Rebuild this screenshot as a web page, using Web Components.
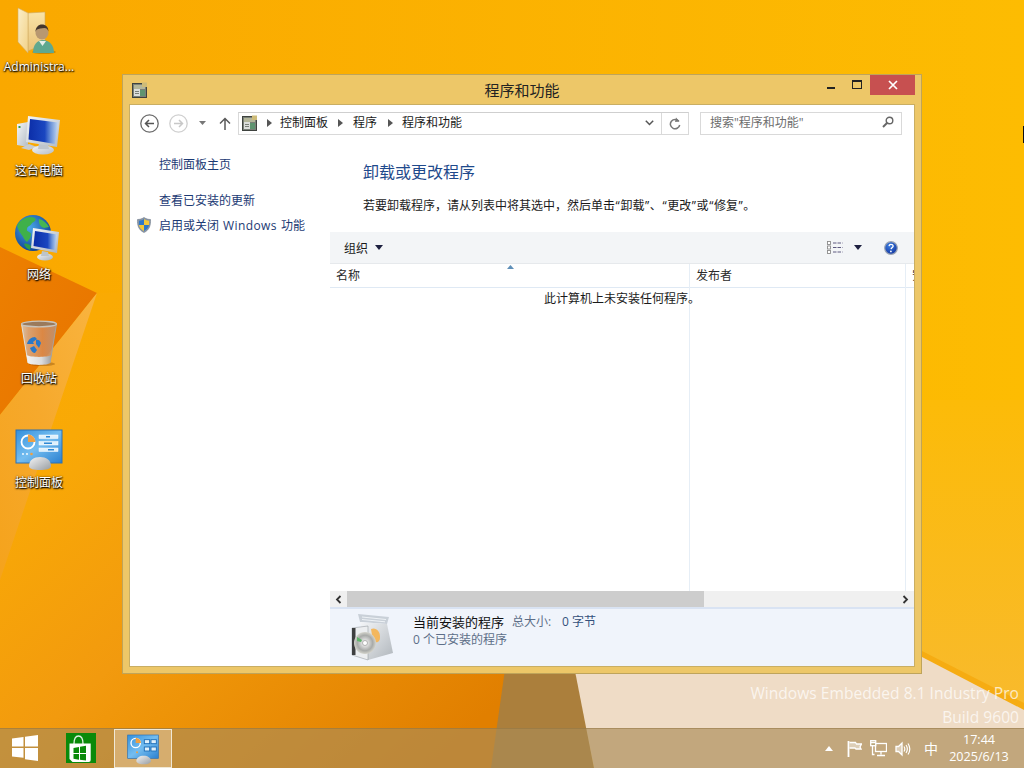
<!DOCTYPE html>
<html lang="zh">
<head>
<meta charset="utf-8">
<title>程序和功能</title>
<style>
    html, body { margin: 0; padding: 0; }
    body {
        width: 1024px;
        height: 768px;
        overflow: hidden;
        font-family: "Open Sans", "Noto Sans CJK SC", sans-serif;
        font-size: 12px;
    }
    svg { display: block; }
</style>
</head>
<body>
<win-desktop>
    <desk-icon>
        <svg slot="icon" width="48" height="48" viewBox="0 0 48 48">
            <defs>
                <linearGradient id="fb" x1="0" y1="0" x2="0" y2="1"><stop offset="0" stop-color="#f9e3a8"/><stop offset="1" stop-color="#e9c378"/></linearGradient>
                <linearGradient id="ff" x1="0" y1="0" x2="1" y2="1"><stop offset="0" stop-color="#fbeec8"/><stop offset="1" stop-color="#f2d288"/></linearGradient>
            </defs>
            <polygon points="13,6 30,5 30,37 13,44" fill="url(#fb)" stroke="#cfa85e" stroke-width=".6"/>
            <polygon points="3,1 13,6 13,46 3,35" fill="url(#ff)" stroke="#d4ae66" stroke-width=".6"/>
            <ellipse cx="29" cy="45" rx="12" ry="2" fill="#8a5a00" opacity=".4"/>
            <path d="M18 46c0-8 4-13 10-13s11 5 11 13z" fill="#5fa88f"/>
            <path d="M24 34l3.500 5 3.500-5z" fill="#e8efe8"/>
            <circle cx="27" cy="26" r="6.500" fill="#b89870"/>
            <path d="M20.500 25c0-5 3-7.500 6.500-7.500s6.500 2.500 6.500 7c-1-2.500-2-3.500-4-3.500-3 .5-6 .5-7.500 1.500-.8.6-1 1.500-1.500 2.500z" fill="#43352c"/>
        </svg>
        Administra...
    </desk-icon>
    <desk-icon>
        <svg slot="icon" width="48" height="48" viewBox="0 0 48 48">
            <defs>
                <linearGradient id="sc" x1="0" y1="0" x2="1" y2="0"><stop offset="0" stop-color="#0c2ea8"/><stop offset=".55" stop-color="#1a46c0"/><stop offset=".75" stop-color="#6a92d8"/><stop offset="1" stop-color="#c4d8f0"/></linearGradient>
                <linearGradient id="sv" x1="0" y1="0" x2="1" y2="1"><stop offset="0" stop-color="#f4f6f8"/><stop offset="1" stop-color="#b4bcc4"/></linearGradient>
            </defs>
            <polygon points="2,13 13,11 13,36 2,34" fill="url(#sv)"/>
            <rect x="3.500" y="15" width="2" height="2" fill="#3a9a4a"/>
            <path d="M6 37l8-4 8 3-8 3z" fill="#c8ccd0"/>
            <ellipse cx="28" cy="39" rx="11" ry="4.500" fill="url(#sv)"/>
            <polygon points="24,32 33,33 34,38 23,38" fill="#c0c6cc"/>
            <polygon points="13,5 45,9 42,36 11,31" fill="url(#sv)"/>
            <polygon points="15,8 43,11.500 40,33 13.500,28.500" fill="url(#sc)"/>
        </svg>
        这台电脑
    </desk-icon>
    <desk-icon>
        <svg slot="icon" width="48" height="48" viewBox="0 0 48 48">
            <defs>
                <radialGradient id="gl" cx=".4" cy=".35" r=".7"><stop offset="0" stop-color="#4aa8e8"/><stop offset="1" stop-color="#0c3e92"/></radialGradient>
                <linearGradient id="sc2" x1="0" y1="0" x2="1" y2="0"><stop offset="0" stop-color="#0c2ea8"/><stop offset=".6" stop-color="#1a46c0"/><stop offset=".78" stop-color="#6a92d8"/><stop offset="1" stop-color="#c4d8f0"/></linearGradient>
                <linearGradient id="sv2" x1="0" y1="0" x2="1" y2="1"><stop offset="0" stop-color="#f4f6f8"/><stop offset="1" stop-color="#aab2ba"/></linearGradient>
            </defs>
            <circle cx="18" cy="18" r="18" fill="url(#gl)"/>
            <path d="M7 5c4-3 9-4 13-2 2 2-1 4-3 5-1 3-5 3-5 6-1 3 3 2 4 5 0 3-2 6-4 8-3-2-4-6-6-8-2-3-3-5-4-8 1-3 3-5 5-6z" fill="#3fb04a"/>
            <path d="M24 4c4 1 8 4 10 8l-5 1c-3-1-6-4-5-9z" fill="#45b552"/>
            <path d="M9 29c2-1 5 0 7 2l-1 4c-3-1-5-3-6-6z" fill="#2f9c48"/>
            <ellipse cx="30" cy="42" rx="8" ry="3.500" fill="url(#sv2)"/>
            <polygon points="27,36 33,37 34,41 26,41" fill="#bcc4ca"/>
            <polygon points="18,13 44,17 42,38 16,33" fill="url(#sv2)"/>
            <polygon points="20,16 42,19.500 40,35 18.500,31" fill="url(#sc2)"/>
        </svg>
        网络
    </desk-icon>
    <desk-icon>
        <svg slot="icon" width="48" height="48" viewBox="0 0 48 48">
            <defs>
                <linearGradient id="bn" x1="0" y1="0" x2="1" y2="0"><stop offset="0" stop-color="#d4ccc2"/><stop offset=".2" stop-color="#d8a884"/><stop offset=".6" stop-color="#d98a50"/><stop offset="1" stop-color="#b89480"/></linearGradient>
                <linearGradient id="pp" x1="0" y1="0" x2="1" y2="0"><stop offset="0" stop-color="#f4f4f4"/><stop offset=".6" stop-color="#dcdcdc"/><stop offset="1" stop-color="#9ea0a2"/></linearGradient>
            </defs>
            <ellipse cx="27" cy="45" rx="13" ry="2" fill="#8a4a00" opacity=".4"/>
            <path d="M6.500 5l6.500 39c3 2.500 19 2.500 22 0l6.500-39z" fill="url(#bn)" opacity=".85"/>
            <path d="M6.500 5l6.500 39" stroke="#e4e0d8" stroke-width="1" fill="none"/>
            <path d="M41.500 5l-6.500 39" stroke="#a8a49c" stroke-width="1" fill="none"/>
            <ellipse cx="24" cy="5" rx="17.500" ry="2.800" fill="#9a7a5c" stroke="#c8c4bc" stroke-width="1.300"/>
            <path d="M11.500 36c4 2.500 21 2.500 25 0l-1.500 8c-3 2.500-19 2.500-22 0z" fill="url(#pp)"/>
            <path d="M12 25c1-4 4-7 8-7l2 2-4 3 1 2zM15 29l4-2 3 4-2 3c-2 0-4-2-5-5zM21 21c2-1 4 0 5 3l-2 5-3-4z" fill="#2a78c8"/>
        </svg>
        回收站
    </desk-icon>
    <desk-icon>
        <svg slot="icon" width="48" height="48" viewBox="0 0 48 48">
            <defs>
                <linearGradient id="cp" x1="0" y1="0" x2="1" y2="1"><stop offset="0" stop-color="#3390dc"/><stop offset=".5" stop-color="#74bdf0"/><stop offset="1" stop-color="#2a80d0"/></linearGradient>
                <linearGradient id="dm" x1="0" y1="0" x2="1" y2="1"><stop offset="0" stop-color="#f4f4f4"/><stop offset="1" stop-color="#989da2"/></linearGradient>
            </defs>
            <rect x="1" y="7" width="46" height="33" fill="url(#cp)" stroke="#2a70b4"/>
            <circle cx="13" cy="19" r="6.500" fill="none" stroke="#ffffff" stroke-width="1.800"/>
            <path d="M13 11.500a7.500 7.500 0 0 1 7.500 7.500h-7.500z" fill="#f0a040"/>
            <g fill="#dff0fb" stroke="#ffffff" stroke-width=".5">
                <rect x="24" y="12" width="19" height="3.500"/><rect x="24" y="18.500" width="19" height="3.500"/><rect x="24" y="25" width="19" height="3.500"/>
            </g>
            <rect x="31" y="13" width="4" height="1.500" fill="#2f88d4"/><rect x="29" y="19.500" width="8" height="1.500" fill="#2f88d4"/><rect x="33" y="26" width="6" height="1.500" fill="#2f88d4"/>
            <circle cx="8" cy="31" r=".9" fill="#fff"/><circle cx="12" cy="31" r=".9" fill="#fff"/><circle cx="16.500" cy="31" r="1.300" fill="#f0a040"/>
            <path d="M14 43c0-6 5-9 11-9s11 3 11 9c0 3-5 4-11 4s-11-1-11-4z" fill="url(#dm)"/>
        </svg>
        控制面板
    </desk-icon>

    <app-window slot="window" heading="程序和功能">
        <explorer-nav slot="nav"></explorer-nav>
        <side-panel slot="side"></side-panel>
        <programs-pane slot="main"></programs-pane>
    </app-window>

    <task-bar slot="taskbar"></task-bar>
</win-desktop>

<script>
// icons used by more than one shadow tree
const smallCp = `
<svg width="16" height="16" viewBox="0 0 16 16">
    <rect x="0.500" y="1.500" width="14" height="14" fill="#7a8078" stroke="#3e423e"/>
    <rect x="2" y="3" width="11" height="4" fill="#b4b69a"/>
    <rect x="10" y="0.500" width="5" height="4.500" fill="#cdbb78"/>
    <rect x="2" y="7" width="6" height="7" fill="#dcdedc"/>
    <rect x="8" y="8" width="5" height="6" fill="#5f9470"/>
    <rect x="3" y="9" width="4" height="1" fill="#7a8078"/>
    <rect x="3" y="11" width="4" height="1" fill="#7a8078"/>
</svg>`;

const chevron = (left, right) => `<svg style="margin:0 ${right}px 0 ${left}px" width="5" height="8" viewBox="0 0 5 8"><path d="M0 0l5 4-5 4z" fill="#555"/></svg>`;

function makeElement(name, html) {
    const tpl = document.createElement('template');
    tpl.innerHTML = html;
    class El extends HTMLElement {
        constructor() {
            super();
            const shadow = this.attachShadow({mode: 'open'});
            shadow.append(tpl.content.cloneNode(true));
            const heading = shadow.querySelector('[data-heading]');
            if (heading) heading.textContent = this.getAttribute('heading');
        }
    }
    customElements.define(name, El);
}

makeElement('win-desktop', `
<style>
    :host {
        display: flex;
        flex-direction: column;
        position: relative;
        width: 1024px;
        height: 768px;
        overflow: hidden;
    }
    .wall { position: absolute; left: 0; top: 0; }
    .icons {
        position: relative;
        flex: 1;
        display: flex;
        flex-direction: column;
        padding-top: 7px;
        width: 78px;
    }
    .win { position: absolute; left: 122px; top: 74px; }
    .mark {
        position: absolute;
        right: 5px;
        top: 681px;
        text-align: right;
        color: rgba(255,255,255,.72);
        font-size: 15.6px;
        line-height: 24px;
    }
    .bar { position: relative; }
    .cursor { position: absolute; right: 0; top: 126px; width: 1px; height: 17px; background: #111; }
</style>
<svg class="wall" width="1024" height="768" viewBox="0 0 1024 768">
    <defs>
        <linearGradient id="base" x1="0" y1="0" x2="1" y2="0"><stop offset="0" stop-color="#faa800"/><stop offset="1" stop-color="#fdbc02"/></linearGradient>
        <linearGradient id="low" x1="0" y1="0" x2="1" y2="1"><stop offset="0" stop-color="#fbab00"/><stop offset=".22" stop-color="#f9a906"/><stop offset=".5" stop-color="#f29a0e"/><stop offset=".6" stop-color="#ee9408"/><stop offset=".91" stop-color="#e17f00"/></linearGradient>
        <linearGradient id="wedge" x1="0" y1="0" x2="1" y2="1"><stop offset="0" stop-color="#ed8000"/><stop offset="1" stop-color="#e77300"/></linearGradient>
        <linearGradient id="ray" x1="1" y1="0" x2="0" y2="1"><stop offset="0" stop-color="#f9b440"/><stop offset=".5" stop-color="#f6a92c"/><stop offset="1" stop-color="#f5a31c"/></linearGradient>
        <linearGradient id="right" x1="0" y1="0" x2="0" y2="1"><stop offset="0" stop-color="#fcbb08"/><stop offset="1" stop-color="#f8ba2e"/></linearGradient>
    </defs>
    <rect width="1024" height="768" fill="url(#base)"/>
    <rect x="922" y="400" width="102" height="320" fill="url(#right)"/>
    <polygon points="0,415 97,293 520,293 505,768 0,768" fill="url(#low)"/>
    <polygon points="0,247 97,293 0,415" fill="url(#wedge)"/>
    <polygon points="97,293 0,415 0,580" fill="url(#ray)"/>
    <polygon points="512,620 567,620 594,768 491,768" fill="#ab7f3c"/>
    <polygon points="922,651 1024,703 1024,711 922,658" fill="#f6ac12"/>
    <polygon points="565,620 922,657 1024,710 1024,768 594,768" fill="#efdcc6"/>
</svg>
<div class="icons"><slot></slot></div>
<div class="mark">Windows Embedded 8.1 Industry Pro<br>Build 9600</div>
<div class="win"><slot name="window"></slot></div>
<div class="bar"><slot name="taskbar"></slot></div>
<div class="cursor"></div>
`);

makeElement('desk-icon', `
<style>
    :host {
        display: flex;
        flex-direction: column;
        align-items: center;
        width: 78px;
        height: 104px;
        color: #fff;
        font-size: 12px;
        line-height: 16px;
        text-shadow: 0 1px 2px #000, 1px 1px 1px rgba(0,0,0,.75), 0 0 2px rgba(0,0,0,.6);
        white-space: nowrap;
    }
    .pic { width: 48px; height: 48px; margin-bottom: 4px; }
</style>
<div class="pic"><slot name="icon"></slot></div>
<slot></slot>
`);

makeElement('app-window', `
<style>
    :host {
        display: block;
        width: 800px;
        height: 600px;
        box-sizing: border-box;
        background: #edc768;
        border: 1px solid #bfa45a;
        padding: 0 6px 6px 6px;
    }
    .frame { display: flex; flex-direction: column; height: 100%; }
    .title {
        display: flex;
        align-items: flex-start;
        height: 29px;
        position: relative;
    }
    .appicon { margin: 7px 0 0 3px; }
    .text {
        position: absolute;
        left: 0;
        right: 0;
        top: 4px;
        text-align: center;
        font-size: 15px;
        line-height: 22px;
        color: #222;
    }
    .ctrls { margin-left: auto; display: flex; align-items: flex-start; position: relative; }
    .btn { width: 26px; height: 20px; display: flex; align-items: center; justify-content: center; }
    .min { padding-right: 1px; box-sizing: border-box; }
    .close { width: 45px; background: #c75050; }
    .client {
        flex: 1;
        min-height: 0;
        display: flex;
        flex-direction: column;
        background: #fff;
        border: 1px solid #c9ae63;
    }
    .body { flex: 1; min-height: 0; display: flex; }
</style>
<div class="frame">
    <div class="title">
        <div class="appicon">${smallCp}</div>
        <div class="text" data-heading></div>
        <div class="ctrls">
            <div class="btn min"><svg width="10" height="10" viewBox="0 0 10 10"><rect x="1" y="7" width="8" height="2" fill="#222"/></svg></div>
            <div class="btn"><svg width="12" height="10" viewBox="0 0 12 10"><rect x="1.500" y="0.500" width="9" height="8" fill="none" stroke="#222"/><rect x="1" y="0" width="10" height="2" fill="#222"/></svg></div>
            <div class="btn close"><svg width="10" height="10" viewBox="0 0 10 10"><path d="M1 1l8 8M9 1l-8 8" stroke="#fff" stroke-width="1.700"/></svg></div>
        </div>
    </div>
    <div class="client">
        <slot name="nav"></slot>
        <div class="body">
            <slot name="side"></slot>
            <slot name="main"></slot>
        </div>
    </div>
</div>
`);

makeElement('explorer-nav', `
<style>
    :host {
        display: flex;
        align-items: center;
        height: 36px;
        flex: none;
        padding: 0 0 0 10px;
        box-sizing: border-box;
        color: #1a1a1a;
    }
    .fwd, .caret, .up { flex: none; }
    .fwd { margin-left: 10px; }
    .caret { margin-left: 11px; }
    .up { margin-left: 13px; }
    .addr {
        margin-left: 7px;
        width: 451px;
        height: 23px;
        box-sizing: border-box;
        border: 1px solid #d9d9d9;
        border-top-color: #cfcfcf;
        display: flex;
        align-items: center;
        padding-left: 3px;
    }
    .crumb { display: flex; align-items: center; padding-bottom: 2px; }
    .crumb svg { position: relative; top: 1px; }
    .combo { margin-left: auto; display: flex; height: 100%; align-items: center; }
    .drop { width: 23px; display: flex; justify-content: center; }
    .refresh {
        width: 26px;
        height: 100%;
        border-left: 1px solid #d9d9d9;
        display: flex;
        align-items: center;
        justify-content: center;
    }
    .search {
        margin-left: 11px;
        width: 202px;
        height: 23px;
        box-sizing: border-box;
        border: 1px solid #d9d9d9;
        display: flex;
        align-items: center;
        padding: 0 7px 2px 9px;
        color: #6d6d6d;
        white-space: nowrap;
    }
    .search svg { margin-left: auto; }
</style>
<svg width="19" height="19" viewBox="0 0 19 19"><circle cx="9.500" cy="9.500" r="8.700" fill="#fff" stroke="#6a6a6a" stroke-width="1.300"/><path d="M14 9.500H5.500M9 6L5.500 9.500 9 13" fill="none" stroke="#555" stroke-width="1.500"/></svg>
<svg class="fwd" width="19" height="19" viewBox="0 0 19 19"><circle cx="9.500" cy="9.500" r="8.700" fill="#fff" stroke="#cfcfcf" stroke-width="1.300"/><path d="M5 9.500h8.500M10 6l3.500 3.500L10 13" fill="none" stroke="#c8c8c8" stroke-width="1.500"/></svg>
<svg class="caret" width="7" height="4" viewBox="0 0 7 4"><path d="M0 0h7L3.500 4z" fill="#777"/></svg>
<svg class="up" width="12" height="13" viewBox="0 0 12 13"><path d="M6 13V1.500M1 6.500L6 1.500l5 5" fill="none" stroke="#5a5a5a" stroke-width="1.500"/></svg>
<div class="addr">
    ${smallCp}
    <span class="crumb">${chevron(9, 8)}控制面板</span>
    <span class="crumb">${chevron(10, 10)}程序</span>
    <span class="crumb">${chevron(11, 9)}程序和功能</span>
    <div class="combo">
        <div class="drop"><svg width="9" height="6" viewBox="0 0 9 6"><path d="M.8.800L4.500 4.500 8.200.800" fill="none" stroke="#555" stroke-width="1.500"/></svg></div>
        <div class="refresh"><svg width="12" height="13" viewBox="0 0 12 13"><path d="M9.800 4.200A4.700 4.700 0 1 0 10.700 8" fill="none" stroke="#777" stroke-width="1.500"/><path d="M7 .5l3.500 4-4.500 .5z" fill="#777"/></svg></div>
    </div>
</div>
<div class="search">
    搜索"程序和功能"
    <svg width="12" height="12" viewBox="0 0 12 12"><circle cx="7.500" cy="4.500" r="3.300" fill="none" stroke="#666" stroke-width="1.400"/><path d="M5 7L1 11" stroke="#666" stroke-width="2"/></svg>
</div>
`);

makeElement('side-panel', `
<style>
    :host {
        display: flex;
        flex-direction: column;
        flex: none;
        width: 200px;
        box-sizing: border-box;
        padding-top: 16px;
        color: #1c3a74;
        line-height: 16px;
    }
    .link { padding-left: 29px; }
    .second { margin-top: 20px; }
    .third { margin-top: 9px; padding-left: 6px; display: flex; align-items: center; gap: 7px; }
    .third svg { position: relative; top: -1px; }
    .latin { letter-spacing: .4px; word-spacing: .5px; }
</style>
<div class="link">控制面板主页</div>
<div class="link second">查看已安装的更新</div>
<div class="third">
    <svg width="16" height="16" viewBox="0 0 16 16">
        <path d="M8 .5c2 1.300 4 2 6.500 2 .3 5.500-1 10.500-6.500 13C2.500 13 1.200 8 1.500 2.500 4 2.500 6 1.800 8 .5z" fill="#8c98a8" stroke="#6f7a8a" stroke-width=".6"/>
        <path d="M8 2v6H3C2.900 6 3 5 3 3.700 5 3.600 6.500 3 8 2z" fill="#2f78c8"/>
        <path d="M8 2c1.500 1 3 1.600 5 1.700 0 1.300.1 2.300 0 4.300H8z" fill="#f4c93a"/>
        <path d="M3 8h5v6c-3-1.500-4.500-3.500-5-6z" fill="#f4c93a"/>
        <path d="M8 8h5c-.5 2.500-2 4.500-5 6z" fill="#2f78c8"/>
    </svg>
    <span>启用或关闭<span class="latin"> Windows </span>功能</span>
</div>
`);

makeElement('programs-pane', `
<style>
    :host {
        display: flex;
        flex-direction: column;
        flex: 1;
        min-width: 0;
        color: #1a1a1a;
    }
    h1 {
        margin: 21px 0 0 33px;
        font-size: 16px;
        font-weight: normal;
        line-height: 20px;
        color: #1f4a8c;
    }
    p { margin: 16px 0 18px 33px; line-height: 16px; }
    .q { margin: 0 .6px; }
    .tools {
        display: flex;
        align-items: center;
        height: 31px;
        flex: none;
        background: #f3f5f7;
        border-bottom: 1px solid #e6e9ec;
        padding-left: 14px;
    }
    .tri { margin-left: 7px; }
    .view { margin-left: auto; }
    .view + .tri { margin-left: 11px; }
    .help { margin: 0 16px 0 22px; }
    .list {
        flex: 1;
        min-height: 0;
        display: flex;
        overflow: hidden;
        position: relative;
    }
    .col { flex: none; display: flex; flex-direction: column; box-sizing: border-box; border-right: 1px solid #e6eef6; }
    .c1 { width: 360px; position: relative; }
    .c2 { width: 216px; }
    .c3 { flex: 1; min-width: 0; border-right: 0; }
    .head {
        height: 24px;
        box-sizing: border-box;
        border-bottom: 1px solid #dfe9f4;
        padding-left: 6px;
        line-height: 23px;
        white-space: nowrap;
        overflow: hidden;
        color: #2a2a2a;
    }
    .sort { position: absolute; left: 177px; top: 1px; }
    .empty {
        position: absolute;
        left: 0;
        right: 0;
        top: 27px;
        text-align: center;
        line-height: 16px;
    }
    .scroll {
        display: flex;
        flex: none;
        height: 16px;
        background: #f0f0f0;
    }
    .arrow { width: 17px; display: flex; align-items: center; justify-content: center; flex: none; }
    .track { flex: 1; }
    .thumb { width: 357px; height: 100%; background: #cdcdcd; }
    .details {
        flex: none;
        height: 59px;
        box-sizing: border-box;
        border-top: 2px solid #d9e3f3;
        background: #f0f4fb;
        display: flex;
        padding-left: 19px;
    }
    .box { margin: 4px 16px 0 0; }
    .lines { padding-top: 4px; line-height: 18px; }
    .row1 { display: flex; }
    .big { font-size: 13px; color: #111; }
    .key { margin-left: 8px; color: #5d6e88; width: 50px; }
    .val { color: #34507c; }
    .row2 { color: #5d6e88; }
</style>
<h1>卸载或更改程序</h1>
<p>若要卸载程序，请从列表中将其选中，然后单击<span class="q">“</span>卸载<span class="q">”</span>、<span class="q">“</span>更改<span class="q">”</span>或<span class="q">“</span>修复<span class="q">”</span>。</p>
<div class="tools">
    <span>组织</span>
    <svg class="tri" width="8" height="5" viewBox="0 0 8 5"><path d="M0 0h8L4 5z" fill="#1d2040"/></svg>
    <svg class="view" width="16" height="13" viewBox="0 0 16 13">
        <g fill="#fff" stroke="#8c8c8c" stroke-width=".9"><rect x=".5" y=".5" width="3" height="3"/><rect x=".5" y="5" width="3" height="3"/><rect x=".5" y="9.500" width="3" height="3"/></g>
        <g stroke="#5e5a80"><path d="M6 2h9.500M6 6.500h9.500M6 11h9.500" stroke-dasharray="3.500 1"/></g>
    </svg>
    <svg class="tri" width="8" height="5" viewBox="0 0 8 5"><path d="M0 0h8L4 5z" fill="#1d2040"/></svg>
    <svg class="help" width="14" height="14" viewBox="0 0 14 14">
        <defs><radialGradient id="hp" cx=".4" cy=".3" r=".8"><stop offset="0" stop-color="#3f7fe0"/><stop offset="1" stop-color="#0c2f9c"/></radialGradient></defs>
        <circle cx="7" cy="7" r="6.300" fill="url(#hp)" stroke="#9aa4b4" stroke-width="1.200"/>
        <path d="M5 5.200c.2-1.300 1.300-1.900 2.300-1.800 1.300.1 2 1 1.800 2-.2 1.100-1.800 1.400-2 2.800" fill="none" stroke="#fff" stroke-width="1.300"/>
        <circle cx="6.900" cy="10.400" r=".9" fill="#fff"/>
    </svg>
</div>
<div class="list">
    <div class="col c1">
        <div class="head">名称</div>
        <svg class="sort" width="7" height="4" viewBox="0 0 7 4"><path d="M3.500 0L7 4H0z" fill="#5f8fb8"/></svg>
    </div>
    <div class="col c2"><div class="head">发布者</div></div>
    <div class="col c3"><div class="head">安装时间</div></div>
    <div class="empty">此计算机上未安装任何程序。</div>
</div>
<div class="scroll">
    <div class="arrow"><svg width="7" height="9" viewBox="0 0 7 9"><path d="M5.500 1L2 4.500 5.500 8" fill="none" stroke="#333" stroke-width="1.800"/></svg></div>
    <div class="track"><div class="thumb"></div></div>
    <div class="arrow"><svg width="7" height="9" viewBox="0 0 7 9"><path d="M1.500 1L5 4.500 1.500 8" fill="none" stroke="#333" stroke-width="1.800"/></svg></div>
</div>
<div class="details">
    <svg class="box" width="48" height="48" viewBox="0 0 48 48">
        <defs>
            <linearGradient id="bx" x1="0" y1="0" x2="1" y2="1"><stop offset="0" stop-color="#f4f6f8"/><stop offset="1" stop-color="#b0b6bc"/></linearGradient>
            <radialGradient id="cd" cx=".5" cy=".5" r=".5"><stop offset=".2" stop-color="#e8e8e8"/><stop offset=".7" stop-color="#a8aaa8"/><stop offset="1" stop-color="#d4d4cc"/></radialGradient>
        </defs>
        <polygon points="9,1 40,4 38,11 11,9" fill="#c9d0d8"/>
        <path d="M13 4l24 2.500M13 6.500l23 2.300" stroke="#eef2f6" stroke-width="1"/>
        <polygon points="11,9 38,11 44,40 19,47" fill="url(#bx)"/>
        <polygon points="3,15 19,13 19,47 3,42" fill="#eceef0" stroke="#8a9096" stroke-width=".5"/>
        <rect x="3" y="15" width="3.500" height="27" fill="#3e3f40"/>
        <path d="M22 16c5-2 9 2 9 8s-4 6-7 4z" fill="#f3b75e"/>
        <circle cx="16" cy="30" r="11" fill="url(#cd)"/>
        <circle cx="16" cy="30" r="2.500" fill="#fff" stroke="#888" stroke-width=".6"/>
        <path d="M8 24l5 3-1 2-4-1z" fill="#5fb36a"/>
    </svg>
    <div class="lines">
        <div class="row1"><span class="big">当前安装的程序</span><span class="key">总大小:</span><span class="val">0 字节</span></div>
        <div class="row2">0 个已安装的程序</div>
    </div>
</div>
`);

makeElement('task-bar', `
<style>
    :host {
        display: flex;
        align-items: center;
        height: 40px;
        box-sizing: border-box;
        background: rgba(170,140,86,.66);
        border-top: 1px solid rgba(140,110,60,.45);
        color: #fff;
    }
    .start { margin: -2px 0 0 12px; }
    .store { margin: -2px 0 0 28px; }
    .active {
        margin-left: 18px;
        width: 58px;
        height: 39px;
        box-sizing: border-box;
        border: 1px solid #f0e8d6;
        background: rgba(255,235,210,.34);
        display: flex;
        align-items: center;
        justify-content: center;
    }
    .tray { margin-left: auto; display: flex; align-items: center; }
    .tray svg { flex: none; }
    .ime { margin-left: 13px; font-size: 14px; width: 14px; line-height: 18px; }
    .clock { margin: -2px 10px 0 6px; width: 70px; text-align: center; line-height: 17px; font-size: 12.6px; }
</style>
<svg class="start" width="26" height="26" viewBox="0 0 26 26">
    <path d="M0 3.500L11.500 2v9.500H0zM13 1.800L26 0v11.500H13zM0 13h11.500v9.800L0 21.500zM13 13h13v13l-13-1.800z" fill="#fff"/>
</svg>
<svg class="store" width="30" height="30" viewBox="0 0 30 30">
    <rect width="30" height="30" fill="#0a8a0a"/>
    <path d="M8 11c0-5 2-8 4.500-8s4.500 3 4.500 8" fill="none" stroke="#e4f2e4" stroke-width="1.300"/>
    <path d="M3.500 10.500h21.200V27a2 2 0 0 1-2 2H6.500l-3-3z" fill="#fff"/>
    <path d="M7.500 15l5.500-1v6H7.500zM14 13.800l6-1V20h-6zM7.500 21H13v5.800l-5.500-1zM14 21h6v6.500l-6-.8z" fill="#0a8a0a"/>
</svg>
<div class="active">
    <svg width="32" height="32" viewBox="0 0 48 48">
        <defs>
            <linearGradient id="cp" x1="0" y1="0" x2="1" y2="1"><stop offset="0" stop-color="#3390dc"/><stop offset=".5" stop-color="#74bdf0"/><stop offset="1" stop-color="#2a80d0"/></linearGradient>
            <linearGradient id="dm" x1="0" y1="0" x2="1" y2="1"><stop offset="0" stop-color="#f4f4f4"/><stop offset="1" stop-color="#989da2"/></linearGradient>
        </defs>
        <rect x="1" y="3" width="46" height="35" fill="url(#cp)" stroke="#2a70b4"/>
        <circle cx="13" cy="15" r="7" fill="none" stroke="#fff" stroke-width="2"/>
        <path d="M13 7a8 8 0 0 1 8 8h-8z" fill="#f0a040"/>
        <g fill="#dff0fb" stroke="#1f6fb8" stroke-width="1.400">
            <rect x="26" y="10" width="8" height="6"/><rect x="36" y="10" width="8" height="6"/><rect x="26" y="21" width="8" height="6"/><rect x="36" y="21" width="8" height="6"/>
        </g>
        <circle cx="15" cy="29" r="1.500" fill="#f0a040"/>
        <path d="M14 42c0-5 5-8 11-8s11 3 11 8c0 3-5 5-11 5s-11-2-11-5z" fill="url(#dm)"/>
    </svg>
</div>
<div class="tray">
    <svg width="8" height="5" viewBox="0 0 8 5"><path d="M4 0l4 5H0z" fill="#fff"/></svg>
    <svg style="margin-left:14px" width="15" height="16" viewBox="0 0 15 16"><path d="M1.500 0v16" stroke="#fff" stroke-width="1.800"/><path d="M2.500 1.500h6l1 1.500h5l-1.500 3 1 2h-5L8 7H2.500" fill="rgba(255,255,255,.45)" stroke="#fff" stroke-width="1.300"/></svg>
    <svg style="margin-left:8px" width="17" height="17" viewBox="0 0 17 17" fill="none" stroke="#fff" stroke-width="1.300"><rect x="5.500" y="3.500" width="11" height="8"/><path d="M11 11.500v3M7 15.500h8"/><rect x=".7" y=".7" width="5" height="5" fill="#b9a678"/><path d="M2.500 5.500v9h2M.5 2.500h5"/></svg>
    <svg style="margin-left:8px" width="16" height="16" viewBox="0 0 16 16" fill="none" stroke="#fff"><path d="M1 5.500h2.500L7 2v12l-3.500-3.500H1z" stroke-width="1.300" fill="rgba(255,255,255,.45)"/><path d="M9 5.500c1 1.500 1 3.500 0 5M11 4c1.700 2.500 1.700 5.500 0 8M13 2.500c2.300 3.500 2.300 7.500 0 11" stroke-width="1.200"/></svg>
    <div class="ime">中</div>
    <div class="clock">17:44<br>2025/6/13</div>
</div>
`);
</script>
</body>
</html>
